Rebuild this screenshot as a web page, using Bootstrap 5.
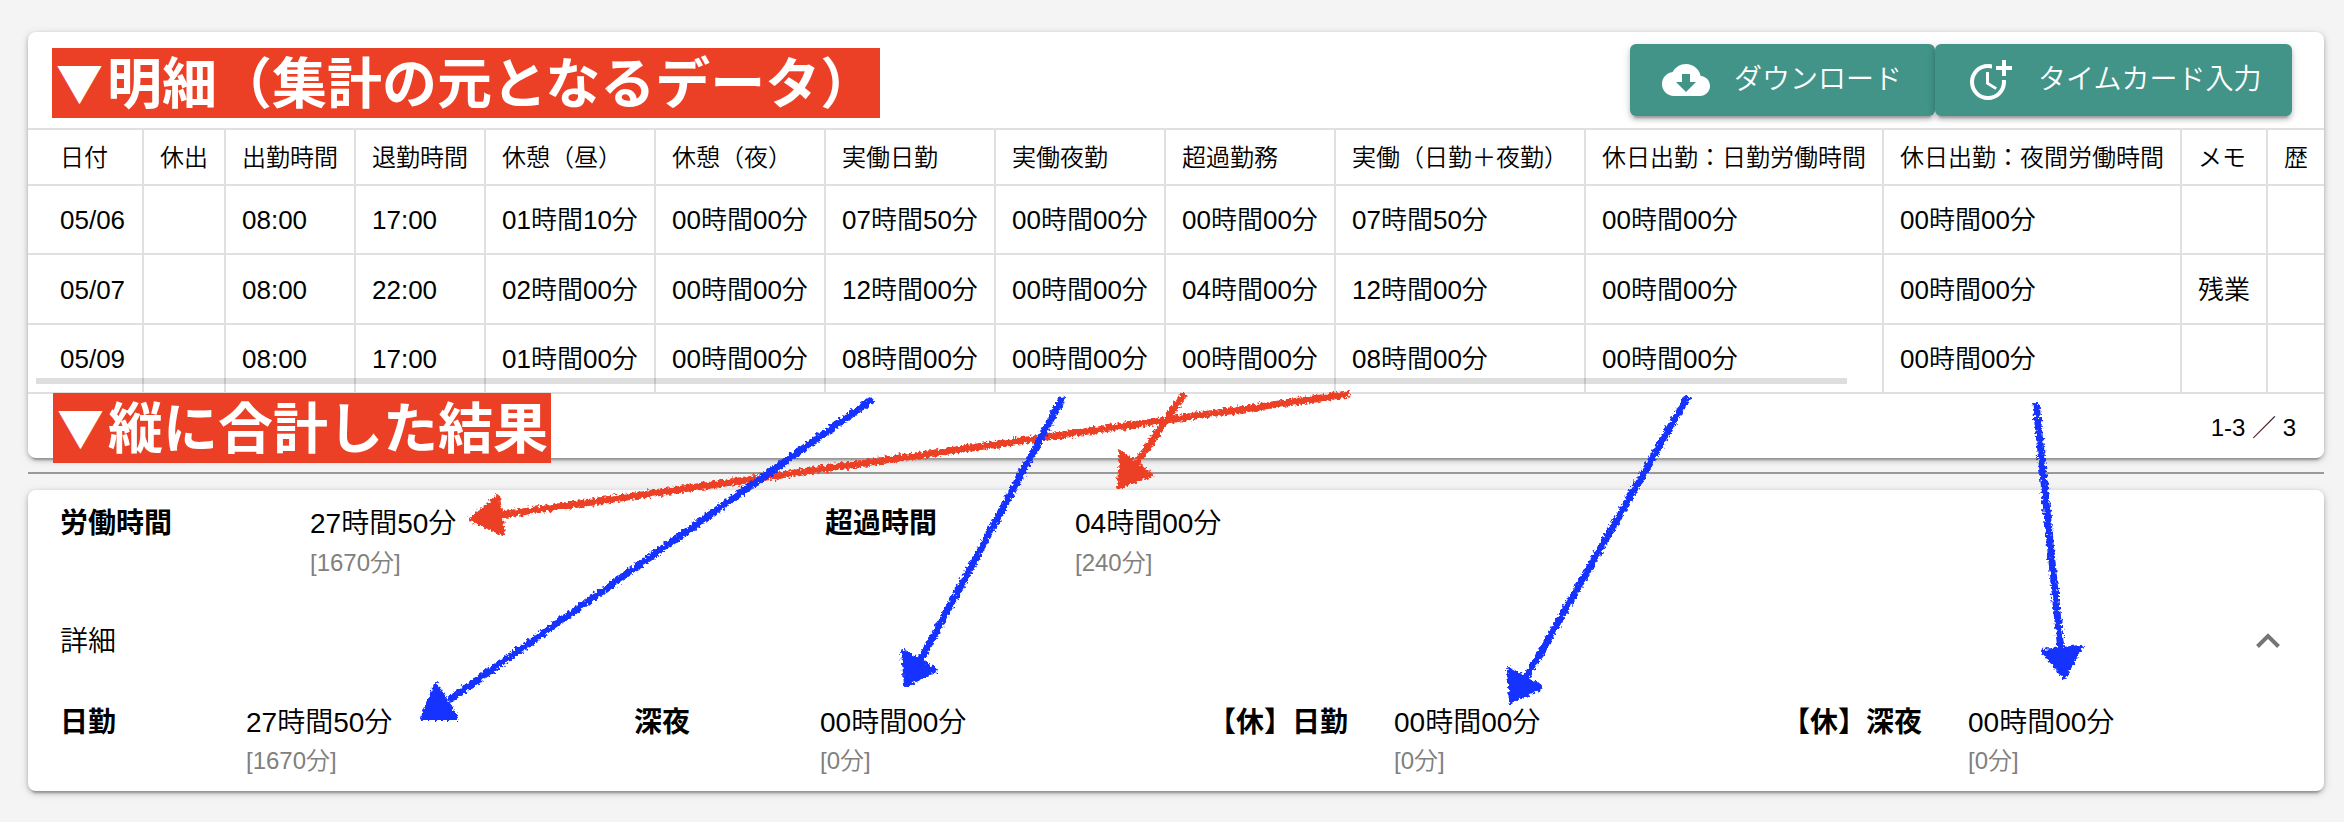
<!DOCTYPE html>
<html lang="ja">
<head>
<meta charset="utf-8">
<title>勤怠集計</title>
<link href="https://cdn.jsdelivr.net/npm/bootstrap@5.3.0/dist/css/bootstrap.min.css" rel="stylesheet">
<style>
body{background:#f4f4f4;color:#000;font-family:"Liberation Sans","Noto Sans CJK JP",sans-serif;font-weight:350;width:2344px;height:822px;overflow:hidden;padding:32px 20px 0 28px}
.panel{border:0;border-radius:8px;background:#fff;box-shadow:0 6px 2px -4px rgba(0,0,0,.2),0 2px 4px rgba(0,0,0,.22),0 2px 10px rgba(0,0,0,.14)}
.detail{height:426px}
.summary{height:301px;font-size:28px}
.caption-tag{background:#eb4026;color:#fff;font:700 55px/62px "Noto Sans CJK JP",sans-serif;height:70px;white-space:nowrap;padding-left:0}
.tri{display:inline-block;width:55px;font-size:47px;line-height:1;text-align:center;vertical-align:2px}
.tag-top{width:828px;margin:6px 0 0 24px}
.tag-low{left:25px;top:-1px;width:498px}
.head-row{height:96px;padding-right:32px}
.act{background:#429488;color:#fff;height:72px;border-radius:6px;font-size:28px;font-weight:350;line-height:40px;padding:0 0 0 32px;gap:24px;border:0;white-space:nowrap;box-shadow:0 6px 2px -4px rgba(0,0,0,.2),0 4px 4px rgba(0,0,0,.16),0 2px 10px rgba(0,0,0,.14)}
.act:hover{background:#429488;color:#fff}
.act-a{width:305px}.act-b{width:357px;padding-left:31px}
.grid-wrap{height:266px;border-top:2px solid #e0e0e0}
.sheet{table-layout:fixed;width:2296px;border-collapse:separate;border-spacing:0;font-size:26px;line-height:32px;white-space:nowrap}
.sheet th,.sheet td{border-bottom:2px solid #e0e0e0;border-right:2px solid #e0e0e0;padding:0 0 0 16px;vertical-align:middle;font-weight:350}
.sheet th:last-child,.sheet td:last-child{border-right:0}
.sheet th:first-child,.sheet td:first-child{padding-left:32px}
.sheet th{font-size:24px;height:56px;padding-top:1px}
.sheet td{height:69px}.sheet .mid td{height:70px;padding-top:2px}
.scroll-thumb{left:8px;top:248px;width:1811px;height:6px;background:rgba(0,0,0,.13)}
.pager{height:64px;font-size:24px;padding:3px 28px 0 0}
.divider{height:2px;background:#999;margin:14px 0 16px}
.lbl{font-weight:700;line-height:40px;white-space:nowrap}
.val{line-height:40px;white-space:nowrap}
.sub{font-size:24px;line-height:38px;color:#808080}
.totals{padding:14px 0 0 32px;height:123px}
.totals .pair{width:765px}.totals .lbl{width:250px}
.more{padding:0 42px 0 32px;height:56px}
.more span{padding-top:2px}
.parts{padding:34px 0 0 32px}
.parts .sub{line-height:36px}
.parts .pair{width:574px;flex:none}.parts .pair:last-child{width:480px}.parts .lbl{width:186px}
.notes{left:0;top:0;pointer-events:none}
</style>
</head>
<body class="position-relative">
<section class="card panel detail">
  <div class="head-row d-flex align-items-center justify-content-between">
    <div class="caption-tag tag-top"><span class="tri">▼</span>明細（集計の元となるデータ）</div>
    <div class="d-flex">
      <button class="btn act act-a d-flex align-items-center"><svg width="48" height="48" viewBox="0 0 24 24" fill="#fff"><path d="M19.35 10.04C18.67 6.59 15.64 4 12 4 9.11 4 6.6 5.64 5.35 8.04 2.34 8.36 0 10.91 0 14c0 3.31 2.69 6 6 6h13c2.76 0 5-2.24 5-5 0-2.64-2.05-4.78-4.65-4.96zM17 13l-5 5-5-5h3V9h4v4h3z"/></svg><span>ダウンロード</span></button>
      <button class="btn act act-b d-flex align-items-center"><svg width="48" height="48" viewBox="0 0 24 24" fill="#fff"><path d="M10 8v6l4.7 2.9.8-1.2-4-2.4V8z"/><path d="M17.92 12c.05.33.08.66.08 1 0 3.9-3.1 7-7 7s-7-3.1-7-7 3.1-7 7-7c.7 0 1.37.1 2 .29V4.23c-.64-.15-1.31-.23-2-.23-5 0-9 4-9 9s4 9 9 9 9-4 9-9c0-.34-.02-.67-.06-1z"/><path d="M20 5V2h-2v3h-3v2h3v3h2V7h3V5z"/></svg><span>タイムカード入力</span></button>
    </div>
  </div>
  <div class="grid-wrap position-relative">
    <table class="sheet">
      <colgroup><col style="width:116px"><col style="width:82px"><col style="width:130px"><col style="width:130px"><col style="width:170px"><col style="width:170px"><col style="width:170px"><col style="width:170px"><col style="width:170px"><col style="width:250px"><col style="width:298px"><col style="width:298px"><col style="width:86px"><col style="width:56px"></colgroup>
      <thead><tr><th>日付</th><th>休出</th><th>出勤時間</th><th>退勤時間</th><th>休憩（昼）</th><th>休憩（夜）</th><th>実働日勤</th><th>実働夜勤</th><th>超過勤務</th><th>実働（日勤＋夜勤）</th><th>休日出勤：日勤労働時間</th><th>休日出勤：夜間労働時間</th><th>メモ</th><th>歴</th></tr></thead>
      <tbody>
        <tr><td>05/06</td><td></td><td>08:00</td><td>17:00</td><td>01時間10分</td><td>00時間00分</td><td>07時間50分</td><td>00時間00分</td><td>00時間00分</td><td>07時間50分</td><td>00時間00分</td><td>00時間00分</td><td></td><td></td></tr>
        <tr class="mid"><td>05/07</td><td></td><td>08:00</td><td>22:00</td><td>02時間00分</td><td>00時間00分</td><td>12時間00分</td><td>00時間00分</td><td>04時間00分</td><td>12時間00分</td><td>00時間00分</td><td>00時間00分</td><td>残業</td><td></td></tr>
        <tr><td>05/09</td><td></td><td>08:00</td><td>17:00</td><td>01時間00分</td><td>00時間00分</td><td>08時間00分</td><td>00時間00分</td><td>00時間00分</td><td>08時間00分</td><td>00時間00分</td><td>00時間00分</td><td></td><td></td></tr>
      </tbody>
    </table>
    <div class="scroll-thumb position-absolute"></div>
  </div>
  <div class="pager position-relative d-flex align-items-center justify-content-end">
    <div class="caption-tag tag-low position-absolute"><span class="tri">▼</span>縦に合計した結果</div>
    <span>1-3 ／ 3</span>
  </div>
</section>
<div class="divider"></div>
<section class="card panel summary">
  <div class="totals d-flex">
    <div class="pair d-flex"><div class="lbl">労働時間</div><div><div class="val">27時間50分</div><div class="sub">[1670分]</div></div></div>
    <div class="pair d-flex"><div class="lbl">超過時間</div><div><div class="val">04時間00分</div><div class="sub">[240分]</div></div></div>
  </div>
  <div class="more d-flex align-items-center justify-content-between"><span>詳細</span><svg width="28" height="18" viewBox="0 0 28 18" fill="none" stroke="#757575" stroke-width="4"><path d="M3.500 14.500 14 4l10.500 10.500"/></svg></div>
  <div class="parts d-flex">
    <div class="pair d-flex"><div class="lbl">日勤</div><div><div class="val">27時間50分</div><div class="sub">[1670分]</div></div></div>
    <div class="pair d-flex"><div class="lbl">深夜</div><div><div class="val">00時間00分</div><div class="sub">[0分]</div></div></div>
    <div class="pair d-flex"><div class="lbl">【休】日勤</div><div><div class="val">00時間00分</div><div class="sub">[0分]</div></div></div>
    <div class="pair d-flex"><div class="lbl">【休】深夜</div><div><div class="val">00時間00分</div><div class="sub">[0分]</div></div></div>
  </div>
</section>
<!-- chalk arrows from each column to its total -->
<svg class="notes position-absolute" width="2344" height="822" viewBox="0 0 2344 822" stroke-width="7" stroke-linejoin="round">
  <defs><filter id="chalk" filterUnits="userSpaceOnUse" x="0" y="0" width="2344" height="822"><feTurbulence type="fractalNoise" baseFrequency=".35" numOctaves="2" seed="4"/><feDisplacementMap in="SourceGraphic" scale="7" xChannelSelector="R" yChannelSelector="G"/></filter></defs>
  <g filter="url(#chalk)" transform="translate(1 1)">
    <g stroke="#eb4026" fill="#eb4026">
      <path d="M1348 393 500 514M1183 393 1135 463"/>
      <path stroke-width="4" d="M470 518 497 495 502 533ZM1120 451 1134 462 1150 474 1118 486Z"/>
    </g>
    <g stroke="#1433ff" fill="#1433ff">
      <path d="M872 398 448 699M1062 396 919 660M1687 395 1525 677M2035 402 2060 650"/>
      <path stroke-width="4" d="M421 717 435 684 456 717ZM902 650 935 669 905 684ZM1508 668 1540 686 1510 701ZM2042 650 2080 646 2063 676Z"/>
    </g>
  </g>
</svg>
<script src="https://cdn.jsdelivr.net/npm/bootstrap@5.3.0/dist/js/bootstrap.bundle.min.js"></script>
</body>
</html>
